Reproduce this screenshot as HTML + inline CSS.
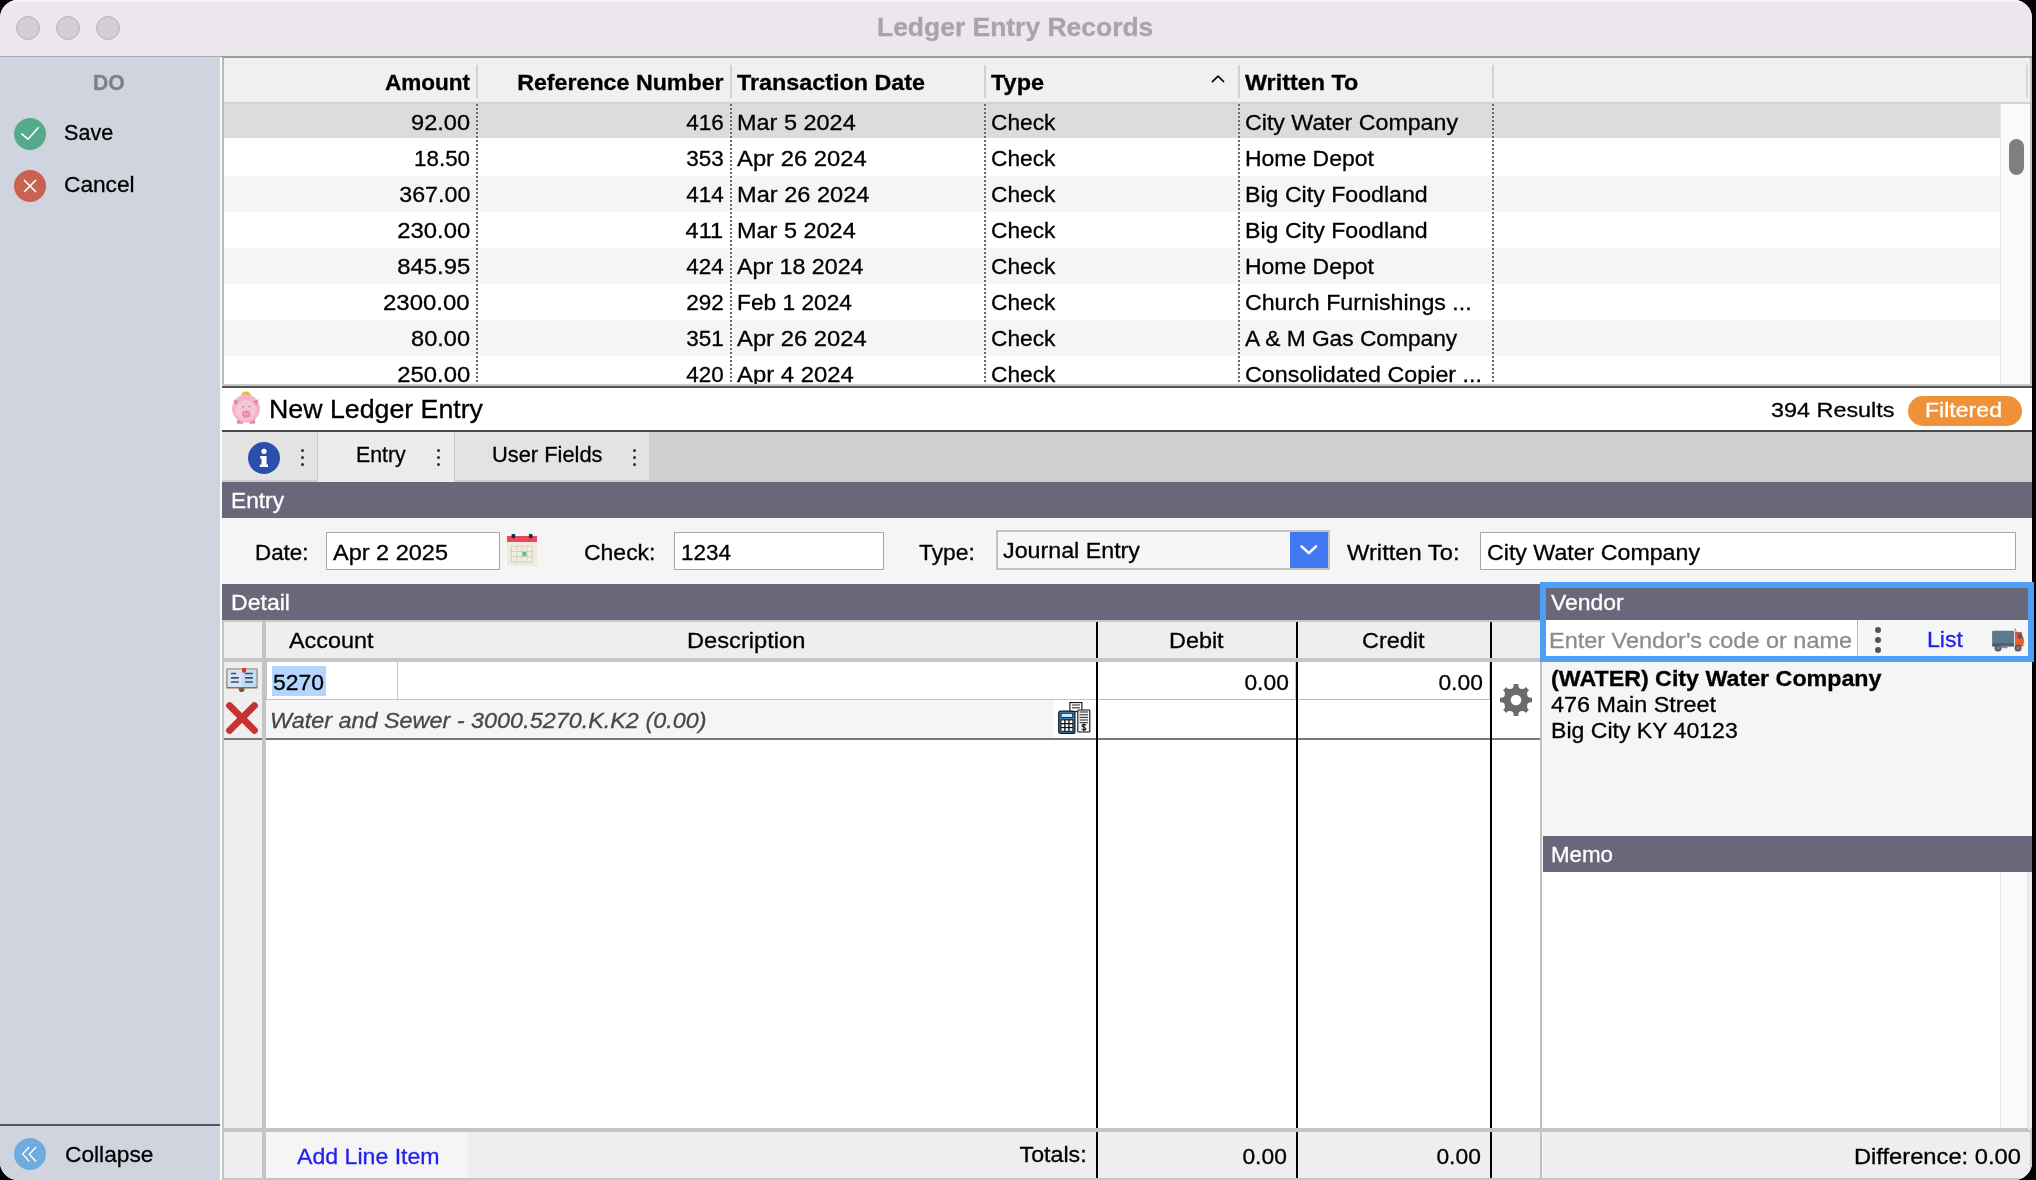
<!DOCTYPE html>
<html><head><meta charset="utf-8"><title>Ledger Entry Records</title>
<style>
html,body{margin:0;padding:0;background:#000;}
body{width:2036px;height:1180px;overflow:hidden;position:relative;font-family:"Liberation Sans", sans-serif;}
#win{position:absolute;left:0;top:0;width:2032px;height:1180px;border-radius:18px;overflow:hidden;background:#fff;}
.b{position:absolute;box-sizing:border-box;}
.t{position:absolute;white-space:pre;display:inline-block;font-family:"Liberation Sans", sans-serif;-webkit-text-stroke:0.3px currentColor;}
svg{position:absolute;overflow:visible;}
</style></head><body>
<div id="win">
<div class="b" style="left:0px;top:0px;width:2032px;height:56px;background:#ece7ed;"></div>
<div class="b" style="left:0px;top:0px;width:2032px;height:2px;background:#f6f3f7;"></div>
<div class="b" style="left:16px;top:16px;width:24px;height:24px;background:#d2ced3;border-radius:50%;border:1px solid #b9b4ba;"></div>
<div class="b" style="left:56px;top:16px;width:24px;height:24px;background:#d2ced3;border-radius:50%;border:1px solid #b9b4ba;"></div>
<div class="b" style="left:96px;top:16px;width:24px;height:24px;background:#d2ced3;border-radius:50%;border:1px solid #b9b4ba;"></div>
<span class="t" style="left:876.60px;top:14px;font-size:26px;line-height:26px;color:#a8a4aa;transform:scaleX(1.0172);transform-origin:left center;font-weight:700;">Ledger Entry Records</span>
<div class="b" style="left:0px;top:56px;width:2032px;height:2px;background:#9c9c9c;"></div>
<div class="b" style="left:0px;top:56px;width:220px;height:1124px;background:#d0d4de;"></div>
<div class="b" style="left:0px;top:56px;width:220px;height:1px;background:#a5afba;"></div>
<div class="b" style="left:220px;top:57px;width:2px;height:1123px;background:#fbfbfb;"></div>
<span class="t" style="left:93.20px;top:72px;font-size:22px;line-height:22px;color:#808080;transform:scaleX(0.9636);transform-origin:left center;font-weight:700;">DO</span>
<span class="t" style="left:64.40px;top:122px;font-size:22px;line-height:22px;color:#000;transform:scaleX(0.9809);transform-origin:left center;">Save</span>
<span class="t" style="left:64.40px;top:174px;font-size:22px;line-height:22px;color:#000;transform:scaleX(1.0309);transform-origin:left center;">Cancel</span>
<div class="b" style="left:0px;top:1124px;width:220px;height:2px;background:#555555;"></div>
<span class="t" style="left:64.80px;top:1144px;font-size:22px;line-height:22px;color:#000;transform:scaleX(1.0326);transform-origin:left center;">Collapse</span>
<div class="b" style="left:222px;top:58px;width:1810px;height:328px;background:#ffffff;"></div>
<div class="b" style="left:222px;top:58px;width:1810px;height:44px;background:#f0f0f0;"></div>
<div class="b" style="left:222px;top:102px;width:1810px;height:2px;background:#d4d4d4;"></div>
<div class="b" style="left:224px;top:104px;width:1776px;height:34px;background:#dcdcdc;"></div>
<div class="b" style="left:224px;top:176px;width:1776px;height:36px;background:#f4f5f5;"></div>
<div class="b" style="left:224px;top:248px;width:1776px;height:36px;background:#f4f5f5;"></div>
<div class="b" style="left:224px;top:320px;width:1776px;height:36px;background:#f4f5f5;"></div>
<div class="b" style="left:476px;top:65px;width:2px;height:33px;background:#d2d2d2;"></div>
<div class="b" style="left:476px;top:104px;width:2px;height:281px;background:repeating-linear-gradient(to bottom,#6a6a6a 0 2px,transparent 2px 4px);"></div>
<div class="b" style="left:730px;top:65px;width:2px;height:33px;background:#d2d2d2;"></div>
<div class="b" style="left:730px;top:104px;width:2px;height:281px;background:repeating-linear-gradient(to bottom,#6a6a6a 0 2px,transparent 2px 4px);"></div>
<div class="b" style="left:984px;top:65px;width:2px;height:33px;background:#d2d2d2;"></div>
<div class="b" style="left:984px;top:104px;width:2px;height:281px;background:repeating-linear-gradient(to bottom,#6a6a6a 0 2px,transparent 2px 4px);"></div>
<div class="b" style="left:1238px;top:65px;width:2px;height:33px;background:#d2d2d2;"></div>
<div class="b" style="left:1238px;top:104px;width:2px;height:281px;background:repeating-linear-gradient(to bottom,#6a6a6a 0 2px,transparent 2px 4px);"></div>
<div class="b" style="left:1492px;top:65px;width:2px;height:33px;background:#d2d2d2;"></div>
<div class="b" style="left:1492px;top:104px;width:2px;height:281px;background:repeating-linear-gradient(to bottom,#6a6a6a 0 2px,transparent 2px 4px);"></div>
<div class="b" style="left:2026px;top:65px;width:2px;height:33px;background:#d8d8d8;"></div>
<div class="b" style="left:2000px;top:104px;width:30px;height:281px;background:#fafafa;border-left:1px solid #e6e6e6;"></div>
<div class="b" style="left:2009px;top:139px;width:15px;height:36px;background:#7f7f7f;border-radius:8px;"></div>
<div class="b" style="left:222px;top:58px;width:2px;height:328px;background:#b9b9b9;"></div>
<div class="b" style="left:2030px;top:58px;width:2px;height:328px;background:#c4c4c4;"></div>
<div class="b" style="left:222px;top:384px;width:1810px;height:2px;background:#c8c8c8;"></div>
<div class="b" style="left:222px;top:386px;width:1810px;height:2px;background:#555555;"></div>
<span class="t" style="left:387.21px;top:72px;font-size:22px;line-height:22px;color:#000;transform:scaleX(1.0253);transform-origin:right center;font-weight:700;">Amount</span>
<span class="t" style="left:527.56px;top:72px;font-size:22px;line-height:22px;color:#000;transform:scaleX(1.0555);transform-origin:right center;font-weight:700;">Reference Number</span>
<span class="t" style="left:736.70px;top:72px;font-size:22px;line-height:22px;color:#000;transform:scaleX(1.0605);transform-origin:left center;font-weight:700;">Transaction Date</span>
<span class="t" style="left:991.00px;top:72px;font-size:22px;line-height:22px;color:#000;transform:scaleX(1.0660);transform-origin:left center;font-weight:700;">Type</span>
<span class="t" style="left:1245.20px;top:72px;font-size:22px;line-height:22px;color:#000;transform:scaleX(1.0606);transform-origin:left center;font-weight:700;">Written To</span>
<div class="b" style="left:222px;top:104px;width:1780px;height:280px;overflow:hidden;"><div style="position:absolute;left:-222px;top:-104px;">
<span class="t" style="left:414.94px;top:112px;font-size:22px;line-height:22px;color:#000;transform:scaleX(1.0715);transform-origin:right center;">92.00</span>
<span class="t" style="left:686.78px;top:112px;font-size:22px;line-height:22px;color:#000;transform:scaleX(1.0213);transform-origin:right center;">416</span>
<span class="t" style="left:736.70px;top:112px;font-size:22px;line-height:22px;color:#000;transform:scaleX(1.0665);transform-origin:left center;">Mar 5 2024</span>
<span class="t" style="left:991.00px;top:112px;font-size:22px;line-height:22px;color:#000;transform:scaleX(1.0327);transform-origin:left center;">Check</span>
<span class="t" style="left:1245.20px;top:112px;font-size:22px;line-height:22px;color:#000;transform:scaleX(1.0538);transform-origin:left center;">City Water Company</span>
<span class="t" style="left:414.94px;top:148px;font-size:22px;line-height:22px;color:#000;transform:scaleX(1.0170);transform-origin:right center;">18.50</span>
<span class="t" style="left:686.78px;top:148px;font-size:22px;line-height:22px;color:#000;transform:scaleX(1.0213);transform-origin:right center;">353</span>
<span class="t" style="left:736.70px;top:148px;font-size:22px;line-height:22px;color:#000;transform:scaleX(1.0820);transform-origin:left center;">Apr 26 2024</span>
<span class="t" style="left:991.00px;top:148px;font-size:22px;line-height:22px;color:#000;transform:scaleX(1.0327);transform-origin:left center;">Check</span>
<span class="t" style="left:1245.20px;top:148px;font-size:22px;line-height:22px;color:#000;transform:scaleX(1.0436);transform-origin:left center;">Home Depot</span>
<span class="t" style="left:402.70px;top:184px;font-size:22px;line-height:22px;color:#000;transform:scaleX(1.0550);transform-origin:right center;">367.00</span>
<span class="t" style="left:686.78px;top:184px;font-size:22px;line-height:22px;color:#000;transform:scaleX(1.0213);transform-origin:right center;">414</span>
<span class="t" style="left:736.70px;top:184px;font-size:22px;line-height:22px;color:#000;transform:scaleX(1.0718);transform-origin:left center;">Mar 26 2024</span>
<span class="t" style="left:991.00px;top:184px;font-size:22px;line-height:22px;color:#000;transform:scaleX(1.0327);transform-origin:left center;">Check</span>
<span class="t" style="left:1245.20px;top:184px;font-size:22px;line-height:22px;color:#000;transform:scaleX(1.0521);transform-origin:left center;">Big City Foodland</span>
<span class="t" style="left:402.70px;top:220px;font-size:22px;line-height:22px;color:#000;transform:scaleX(1.0847);transform-origin:right center;">230.00</span>
<span class="t" style="left:688.42px;top:220px;font-size:22px;line-height:22px;color:#000;transform:scaleX(1.0690);transform-origin:right center;">411</span>
<span class="t" style="left:736.70px;top:220px;font-size:22px;line-height:22px;color:#000;transform:scaleX(1.0665);transform-origin:left center;">Mar 5 2024</span>
<span class="t" style="left:991.00px;top:220px;font-size:22px;line-height:22px;color:#000;transform:scaleX(1.0327);transform-origin:left center;">Check</span>
<span class="t" style="left:1245.20px;top:220px;font-size:22px;line-height:22px;color:#000;transform:scaleX(1.0521);transform-origin:left center;">Big City Foodland</span>
<span class="t" style="left:402.70px;top:256px;font-size:22px;line-height:22px;color:#000;transform:scaleX(1.0847);transform-origin:right center;">845.95</span>
<span class="t" style="left:686.78px;top:256px;font-size:22px;line-height:22px;color:#000;transform:scaleX(1.0213);transform-origin:right center;">424</span>
<span class="t" style="left:736.70px;top:256px;font-size:22px;line-height:22px;color:#000;transform:scaleX(1.0553);transform-origin:left center;">Apr 18 2024</span>
<span class="t" style="left:991.00px;top:256px;font-size:22px;line-height:22px;color:#000;transform:scaleX(1.0327);transform-origin:left center;">Check</span>
<span class="t" style="left:1245.20px;top:256px;font-size:22px;line-height:22px;color:#000;transform:scaleX(1.0436);transform-origin:left center;">Home Depot</span>
<span class="t" style="left:390.47px;top:292px;font-size:22px;line-height:22px;color:#000;transform:scaleX(1.0876);transform-origin:right center;">2300.00</span>
<span class="t" style="left:686.78px;top:292px;font-size:22px;line-height:22px;color:#000;transform:scaleX(1.0213);transform-origin:right center;">292</span>
<span class="t" style="left:736.70px;top:292px;font-size:22px;line-height:22px;color:#000;transform:scaleX(1.0331);transform-origin:left center;">Feb 1 2024</span>
<span class="t" style="left:991.00px;top:292px;font-size:22px;line-height:22px;color:#000;transform:scaleX(1.0327);transform-origin:left center;">Check</span>
<span class="t" style="left:1245.20px;top:292px;font-size:22px;line-height:22px;color:#000;transform:scaleX(1.0534);transform-origin:left center;">Church Furnishings ...</span>
<span class="t" style="left:414.94px;top:328px;font-size:22px;line-height:22px;color:#000;transform:scaleX(1.0715);transform-origin:right center;">80.00</span>
<span class="t" style="left:686.78px;top:328px;font-size:22px;line-height:22px;color:#000;transform:scaleX(1.0213);transform-origin:right center;">351</span>
<span class="t" style="left:736.70px;top:328px;font-size:22px;line-height:22px;color:#000;transform:scaleX(1.0820);transform-origin:left center;">Apr 26 2024</span>
<span class="t" style="left:991.00px;top:328px;font-size:22px;line-height:22px;color:#000;transform:scaleX(1.0327);transform-origin:left center;">Check</span>
<span class="t" style="left:1245.20px;top:328px;font-size:22px;line-height:22px;color:#000;transform:scaleX(1.0330);transform-origin:left center;">A &amp; M Gas Company</span>
<span class="t" style="left:402.70px;top:364px;font-size:22px;line-height:22px;color:#000;transform:scaleX(1.0847);transform-origin:right center;">250.00</span>
<span class="t" style="left:686.78px;top:364px;font-size:22px;line-height:22px;color:#000;transform:scaleX(1.0213);transform-origin:right center;">420</span>
<span class="t" style="left:736.70px;top:364px;font-size:22px;line-height:22px;color:#000;transform:scaleX(1.0842);transform-origin:left center;">Apr 4 2024</span>
<span class="t" style="left:991.00px;top:364px;font-size:22px;line-height:22px;color:#000;transform:scaleX(1.0327);transform-origin:left center;">Check</span>
<span class="t" style="left:1245.20px;top:364px;font-size:22px;line-height:22px;color:#000;transform:scaleX(1.0590);transform-origin:left center;">Consolidated Copier ...</span>
</div></div>
<div class="b" style="left:222px;top:388px;width:1810px;height:42px;background:#ffffff;"></div>
<div class="b" style="left:222px;top:430px;width:1810px;height:2px;background:#4a4a4a;"></div>
<span class="t" style="left:269.30px;top:397px;font-size:25px;line-height:25px;color:#000;transform:scaleX(1.0694);transform-origin:left center;">New Ledger Entry</span>
<span class="t" style="left:1770.80px;top:399px;font-size:21px;line-height:21px;color:#000;transform:scaleX(1.1136);transform-origin:left center;">394 Results</span>
<div class="b" style="left:1908px;top:396px;width:114px;height:30px;background:#ef9138;border-radius:15px;"></div>
<span class="t" style="left:1925.10px;top:399px;font-size:21px;line-height:21px;color:#ffffff;transform:scaleX(1.0995);transform-origin:left center;">Filtered</span>
<div class="b" style="left:222px;top:432px;width:1810px;height:50px;background:#d0d0d0;"></div>
<div class="b" style="left:222px;top:432px;width:96px;height:48px;background:#e3e3e3;"></div>
<div class="b" style="left:318px;top:432px;width:136px;height:50px;background:#ececec;"></div>
<div class="b" style="left:455px;top:432px;width:194px;height:48px;background:#e3e3e3;"></div>
<div class="b" style="left:317px;top:432px;width:1px;height:48px;background:#cdcdcd;"></div>
<div class="b" style="left:454px;top:432px;width:1px;height:48px;background:#cdcdcd;"></div>
<span class="t" style="left:356.30px;top:444px;font-size:22px;line-height:22px;color:#000;transform:scaleX(0.9696);transform-origin:left center;">Entry</span>
<span class="t" style="left:491.50px;top:444px;font-size:22px;line-height:22px;color:#000;transform:scaleX(0.9933);transform-origin:left center;">User Fields</span>
<div class="b" style="left:300.5px;top:448.5px;width:3px;height:3px;background:#303030;border-radius:50%;"></div>
<div class="b" style="left:300.5px;top:455.7px;width:3px;height:3px;background:#303030;border-radius:50%;"></div>
<div class="b" style="left:300.5px;top:462.9px;width:3px;height:3px;background:#303030;border-radius:50%;"></div>
<div class="b" style="left:436.5px;top:448.5px;width:3px;height:3px;background:#303030;border-radius:50%;"></div>
<div class="b" style="left:436.5px;top:455.7px;width:3px;height:3px;background:#303030;border-radius:50%;"></div>
<div class="b" style="left:436.5px;top:462.9px;width:3px;height:3px;background:#303030;border-radius:50%;"></div>
<div class="b" style="left:632.5px;top:448.5px;width:3px;height:3px;background:#303030;border-radius:50%;"></div>
<div class="b" style="left:632.5px;top:455.7px;width:3px;height:3px;background:#303030;border-radius:50%;"></div>
<div class="b" style="left:632.5px;top:462.9px;width:3px;height:3px;background:#303030;border-radius:50%;"></div>
<div class="b" style="left:222px;top:482px;width:1810px;height:36px;background:#69677a;"></div>
<span class="t" style="left:230.60px;top:490px;font-size:22px;line-height:22px;color:#fff;transform:scaleX(1.0319);transform-origin:left center;">Entry</span>
<div class="b" style="left:222px;top:518px;width:1810px;height:66px;background:#f5f5f5;"></div>
<span class="t" style="left:255.00px;top:542px;font-size:22px;line-height:22px;color:#000;transform:scaleX(1.0153);transform-origin:left center;">Date:</span>
<div class="b" style="left:326px;top:532px;width:174px;height:38px;background:#fff;border:1px solid #a8a8a8;"></div>
<span class="t" style="left:333.20px;top:542px;font-size:22px;line-height:22px;color:#000;transform:scaleX(1.0684);transform-origin:left center;">Apr 2 2025</span>
<span class="t" style="left:584.30px;top:542px;font-size:22px;line-height:22px;color:#000;transform:scaleX(1.0440);transform-origin:left center;">Check:</span>
<div class="b" style="left:674px;top:532px;width:210px;height:38px;background:#fff;border:1px solid #a8a8a8;"></div>
<span class="t" style="left:681.00px;top:542px;font-size:22px;line-height:22px;color:#000;transform:scaleX(1.0214);transform-origin:left center;">1234</span>
<span class="t" style="left:919.40px;top:542px;font-size:22px;line-height:22px;color:#000;transform:scaleX(1.0369);transform-origin:left center;">Type:</span>
<div class="b" style="left:996px;top:530px;width:334px;height:40px;background:#f6f6f6;border:2px solid #c2c2c2;"></div>
<span class="t" style="left:1003.00px;top:540px;font-size:22px;line-height:22px;color:#000;transform:scaleX(1.0569);transform-origin:left center;">Journal Entry</span>
<div class="b" style="left:1290px;top:532px;width:38px;height:36px;background:#3f78f0;"></div>
<span class="t" style="left:1347.00px;top:542px;font-size:22px;line-height:22px;color:#000;transform:scaleX(1.0782);transform-origin:left center;">Written To:</span>
<div class="b" style="left:1480px;top:532px;width:536px;height:38px;background:#fff;border:1px solid #a8a8a8;"></div>
<span class="t" style="left:1486.80px;top:542px;font-size:22px;line-height:22px;color:#000;transform:scaleX(1.0538);transform-origin:left center;">City Water Company</span>
<div class="b" style="left:222px;top:584px;width:1320px;height:36px;background:#69677a;"></div>
<span class="t" style="left:230.60px;top:592px;font-size:22px;line-height:22px;color:#fff;transform:scaleX(1.0489);transform-origin:left center;">Detail</span>
<div class="b" style="left:222px;top:620px;width:1320px;height:40px;background:#eeeeee;"></div>
<div class="b" style="left:222px;top:662px;width:1320px;height:468px;background:#ffffff;"></div>
<div class="b" style="left:222px;top:620px;width:44px;height:512px;background:#eeeeee;"></div>
<div class="b" style="left:222px;top:620px;width:2px;height:560px;background:#c4c4c4;"></div>
<div class="b" style="left:262px;top:620px;width:4px;height:560px;background:#c4c4c4;"></div>
<span class="t" style="left:288.80px;top:630px;font-size:22px;line-height:22px;color:#000;transform:scaleX(1.0629);transform-origin:left center;">Account</span>
<span class="t" style="left:686.80px;top:630px;font-size:22px;line-height:22px;color:#000;transform:scaleX(1.0750);transform-origin:left center;">Description</span>
<span class="t" style="left:1168.60px;top:630px;font-size:22px;line-height:22px;color:#000;transform:scaleX(1.0631);transform-origin:left center;">Debit</span>
<span class="t" style="left:1362.30px;top:630px;font-size:22px;line-height:22px;color:#000;transform:scaleX(1.0650);transform-origin:left center;">Credit</span>
<div class="b" style="left:266px;top:662px;width:132px;height:38px;background:#fff;border:1px solid #c4c4c4;border-top:none;"></div>
<div class="b" style="left:398px;top:662px;width:698px;height:38px;background:#fff;border-bottom:1px solid #c4c4c4;"></div>
<div class="b" style="left:271.9px;top:666px;width:54px;height:29.5px;background:#b4d5fe;"></div>
<span class="t" style="left:273.10px;top:672px;font-size:22px;line-height:22px;color:#000;transform:scaleX(1.0418);transform-origin:left center;">5270</span>
<div class="b" style="left:1098px;top:662px;width:198px;height:38px;background:#fff;border-bottom:1px solid #b8b8b8;border-right:1px solid #d0d0d0;"></div>
<div class="b" style="left:1298px;top:662px;width:192px;height:38px;background:#fff;border-bottom:1px solid #b8b8b8;border-right:1px solid #d0d0d0;"></div>
<span class="t" style="left:1246.37px;top:672px;font-size:22px;line-height:22px;color:#000;transform:scaleX(1.0367);transform-origin:right center;">0.00</span>
<span class="t" style="left:1440.17px;top:672px;font-size:22px;line-height:22px;color:#000;transform:scaleX(1.0367);transform-origin:right center;">0.00</span>
<div class="b" style="left:266px;top:700px;width:830px;height:38px;background:#f5f5f5;"></div>
<div class="b" style="left:1054px;top:700px;width:42px;height:38px;background:#ffffff;"></div>
<span class="t" style="left:270.00px;top:710px;font-size:22px;line-height:22px;color:#484848;transform:scaleX(1.0633);transform-origin:left center;font-style:italic;">Water and Sewer - 3000.5270.K.K2 (0.00)</span>
<div class="b" style="left:222px;top:738px;width:1320px;height:2px;background:#777777;"></div>
<div class="b" style="left:222px;top:1132px;width:1320px;height:46px;background:#eeeeee;"></div>
<div class="b" style="left:266px;top:1132px;width:202px;height:46px;background:#f5f5f5;"></div>
<div class="b" style="left:222px;top:1128px;width:2px;height:52px;background:#c4c4c4;"></div>
<div class="b" style="left:262px;top:1128px;width:4px;height:52px;background:#c4c4c4;"></div>
<span class="t" style="left:296.60px;top:1146px;font-size:22px;line-height:22px;color:#1f1ff5;transform:scaleX(1.0505);transform-origin:left center;">Add Line Item</span>
<span class="t" style="left:1022.81px;top:1144px;font-size:22px;line-height:22px;color:#000;transform:scaleX(1.0536);transform-origin:right center;">Totals:</span>
<span class="t" style="left:1244.47px;top:1146px;font-size:22px;line-height:22px;color:#000;transform:scaleX(1.0367);transform-origin:right center;">0.00</span>
<span class="t" style="left:1438.37px;top:1146px;font-size:22px;line-height:22px;color:#000;transform:scaleX(1.0367);transform-origin:right center;">0.00</span>
<div class="b" style="left:1096px;top:622px;width:2px;height:556px;background:#000;"></div>
<div class="b" style="left:1296px;top:622px;width:2px;height:556px;background:#000;"></div>
<div class="b" style="left:1490px;top:622px;width:2px;height:556px;background:#000;"></div>
<div class="b" style="left:222px;top:1128px;width:1320px;height:4px;background:#c4c4c4;"></div>
<div class="b" style="left:222px;top:658px;width:1320px;height:4px;background:#c6c6c6;"></div>
<div class="b" style="left:222px;top:620px;width:1320px;height:2px;background:#c8c8c8;"></div>
<div class="b" style="left:222px;top:620px;width:2px;height:560px;background:#c4c4c4;"></div>
<div class="b" style="left:262px;top:620px;width:4px;height:560px;background:#c4c4c4;"></div>
<div class="b" style="left:1540px;top:584px;width:492px;height:596px;background:#f5f5f5;"></div>
<div class="b" style="left:1540px;top:662px;width:2px;height:518px;background:#c0c0c0;"></div>
<div class="b" style="left:1540px;top:584px;width:492px;height:36px;background:#69677a;"></div>
<span class="t" style="left:1550.50px;top:592px;font-size:22px;line-height:22px;color:#fff;transform:scaleX(1.0425);transform-origin:left center;">Vendor</span>
<div class="b" style="left:1545px;top:620px;width:484px;height:38px;background:#f6f6f6;"></div>
<div class="b" style="left:1545px;top:620px;width:313px;height:37px;background:#fff;border-right:1px solid #b8b8b8;"></div>
<span class="t" style="left:1548.50px;top:630px;font-size:22px;line-height:22px;color:#8c8c8c;transform:scaleX(1.0659);transform-origin:left center;">Enter Vendor&#x27;s code or name</span>
<div class="b" style="left:1875px;top:626.8px;width:6px;height:6px;background:#555;border-radius:50%;"></div>
<div class="b" style="left:1875px;top:636.9px;width:6px;height:6px;background:#555;border-radius:50%;"></div>
<div class="b" style="left:1875px;top:647px;width:6px;height:6px;background:#555;border-radius:50%;"></div>
<span class="t" style="left:1927.00px;top:629px;font-size:22px;line-height:22px;color:#1f1ff5;transform:scaleX(1.0511);transform-origin:left center;">List</span>
<span class="t" style="left:1551.30px;top:668px;font-size:22px;line-height:22px;color:#000;transform:scaleX(1.0562);transform-origin:left center;font-weight:700;">(WATER) City Water Company</span>
<span class="t" style="left:1551.30px;top:694px;font-size:22px;line-height:22px;color:#000;transform:scaleX(1.0624);transform-origin:left center;">476 Main Street</span>
<span class="t" style="left:1551.30px;top:720px;font-size:22px;line-height:22px;color:#000;transform:scaleX(1.0480);transform-origin:left center;">Big City KY 40123</span>
<div class="b" style="left:1543px;top:836px;width:489px;height:36px;background:#69677a;"></div>
<span class="t" style="left:1550.50px;top:844px;font-size:22px;line-height:22px;color:#fff;transform:scaleX(1.0143);transform-origin:left center;">Memo</span>
<div class="b" style="left:1543px;top:872px;width:489px;height:258px;background:#ffffff;"></div>
<div class="b" style="left:2000px;top:872px;width:28px;height:258px;background:#fafafa;border-left:1px solid #e6e6e6;border-right:1px solid #e6e6e6;"></div>
<div class="b" style="left:1540px;top:1128px;width:492px;height:4px;background:#c4c4c4;"></div>
<div class="b" style="left:1543px;top:1132px;width:489px;height:46px;background:#eeeeee;"></div>
<div class="b" style="left:2028px;top:872px;width:4px;height:258px;background:#eeeeee;"></div>
<span class="t" style="left:1866.08px;top:1146px;font-size:22px;line-height:22px;color:#000;transform:scaleX(1.0780);transform-origin:right center;">Difference: 0.00</span>
<div class="b" style="left:2030px;top:1128px;width:2px;height:52px;background:#cccccc;"></div>
<div class="b" style="left:222px;top:1178px;width:1810px;height:2px;background:#c4c4c4;"></div>
<svg style="left:14px;top:118px" width="32" height="32" viewBox="0 0 32 32"><circle cx="16" cy="16" r="16" fill="#56a98b"/><path d="M7.3 15.6 L14 21.2 L24.7 9.3" fill="none" stroke="#fff" stroke-width="1.6"/></svg>
<svg style="left:14px;top:170px" width="32" height="32" viewBox="0 0 32 32"><circle cx="16" cy="16" r="16" fill="#c96251"/><path d="M10 10 L22 22 M22 10 L10 22" fill="none" stroke="#fff" stroke-width="1.6"/></svg>
<svg style="left:14px;top:1138px" width="32" height="32" viewBox="0 0 32 32"><circle cx="16" cy="16" r="16" fill="#6fabdc"/><path d="M15.2 9 L8.7 16 L15.2 23.4 M22 9 L15.3 16.2 L22 23.4" fill="none" stroke="#fff" stroke-width="1.4"/></svg>
<svg style="left:1208px;top:72px" width="20" height="14" viewBox="0 0 20 14"><path d="M3.9 10.1 L10.1 4.2 L16 10" fill="none" stroke="#000" stroke-width="1.7"/></svg>
<svg style="left:230px;top:390px" width="32" height="36" viewBox="0 0 32 36">
<ellipse cx="16" cy="5.2" rx="4.8" ry="3.6" fill="#e8b93c"/>
<rect x="7" y="28" width="6.2" height="5.7" fill="#e08aa8"/><rect x="19.3" y="28" width="5.8" height="5.7" fill="#e08aa8"/>
<circle cx="16" cy="18.6" r="14" fill="#f4b3c8"/>
<path d="M3.5 9.5 L9 11 L5.2 15.5 Z M28.5 9.5 L23 11 L26.8 15.5 Z" fill="#dd8aa6"/>
<circle cx="15.8" cy="20.2" r="10.2" fill="#f6c5d7"/>
<ellipse cx="16.3" cy="24.2" rx="4.3" ry="3.6" fill="#e58bab"/>
<circle cx="14.8" cy="24.2" r="0.9" fill="#f6c5d7"/><circle cx="17.8" cy="24.2" r="0.9" fill="#f6c5d7"/>
<circle cx="13.2" cy="16.8" r="0.8" fill="#5d7fa8"/><circle cx="19.5" cy="16.8" r="0.8" fill="#5d7fa8"/>
</svg>
<svg style="left:248px;top:442px" width="32" height="32" viewBox="0 0 32 32"><circle cx="16" cy="16" r="16" fill="#2a4fac"/>
<circle cx="16" cy="9.3" r="2.6" fill="#fff"/>
<path d="M12.2 13.9 H18.6 V22.6 H20 V25.1 H11.8 V22.6 H13.5 V16.4 H12.2 Z" fill="#fff"/></svg>
<svg style="left:507px;top:534px" width="30" height="32" viewBox="0 0 30 32">
<rect x="0" y="2" width="30" height="6.2" fill="#e84a5a"/>
<rect x="0" y="8.2" width="30" height="23.6" fill="#eeecdd"/>
<rect x="4.6" y="0.1" width="3.6" height="4.1" fill="#1f2e48"/><rect x="21.9" y="0.1" width="3.6" height="4.1" fill="#1f2e48"/>
<rect x="4.6" y="12.2" width="20.6" height="15.8" fill="#f0eee0" stroke="#cfcab2" stroke-width="0.8"/>
<path d="M9.75 12.2 V28 M14.9 12.2 V28 M20.05 12.2 V28 M4.6 17.5 H25.2 M4.6 22.7 H25.2" stroke="#cfcab2" stroke-width="0.8" fill="none"/>
<rect x="15.5" y="18" width="3.9" height="4.1" fill="#4fbf9b"/>
</svg>
<svg style="left:1290px;top:532px" width="38" height="36" viewBox="0 0 38 36"><path d="M11.5 14.4 L18.9 21.1 L26 14.4" fill="none" stroke="#fff" stroke-width="2.6" stroke-linecap="round" stroke-linejoin="round"/></svg>
<svg style="left:226px;top:668px" width="32" height="24" viewBox="0 0 32 24">
<circle cx="15.6" cy="21.2" r="2.8" fill="#6f5a42"/>
<rect x="0.4" y="0.6" width="31.2" height="19.8" rx="1" fill="#8b6f4e"/>
<rect x="1.4" y="1.4" width="14.6" height="17.6" fill="#d3e5f7"/><rect x="16" y="1.4" width="14.6" height="17.6" fill="#c0dcf8"/>
<path d="M5.6 5.5 H9.4 M5.6 9.8 H12.2 M5.6 14 H12.2 M19.7 5.5 H26.2 M19.7 9.8 H26.2 M19.7 14 H26.2" stroke="#4a4a55" stroke-width="1.7" stroke-linecap="round"/>
<path d="M16.1 0 H19.9 V4 L18 5 L16.1 4 Z" fill="#d8351f"/>
</svg>
<svg style="left:226px;top:702px" width="32" height="32" viewBox="0 0 32 32"><path d="M3.6 3.6 L28.4 28.4 M28.4 3.6 L3.6 28.4" stroke="#c93232" stroke-width="7" stroke-linecap="round" fill="none"/></svg>
<svg style="left:1057px;top:701px" width="34" height="34" viewBox="0 0 34 34">
<rect x="12.9" y="1.6" width="12" height="9" fill="#fff" stroke="#111" stroke-width="1.1"/>
<path d="M15 4 H23 M15 6.8 H23" stroke="#222" stroke-width="1"/>
<rect x="20.8" y="9" width="12" height="22" rx="0.8" fill="#f4f4f4" stroke="#111" stroke-width="1.1"/>
<path d="M22.6 11 H31 M22.6 13.8 H31 M22.6 16.4 H31 M22.6 19 H31 M22.6 21.7 H31" stroke="#222" stroke-width="1"/>
<path d="M28.9 24.6 C28.9 23 25 23 25 24.7 C25 26.4 28.9 25.9 28.9 27.7 C28.9 29.5 25 29.4 24.9 27.8 M26.9 22.4 V30.5" stroke="#111" stroke-width="1.1" fill="none"/>
<rect x="1.7" y="10.2" width="16.2" height="22.2" rx="2" fill="#3a7fb5" stroke="#0c1a26" stroke-width="1.2"/>
<rect x="4.1" y="12.3" width="11.6" height="4.1" fill="#cfe6f7" stroke="#0c1a26" stroke-width="0.8"/>
<rect x="3.4" y="18.4" width="13" height="12.2" fill="#111"/>
<g fill="#fff"><rect x="4.4" y="19.4" width="2.8" height="2.6"/><rect x="8.5" y="19.4" width="2.8" height="2.6"/><rect x="12.6" y="19.4" width="2.8" height="2.6"/>
<rect x="4.4" y="23.3" width="2.8" height="2.6"/><rect x="8.5" y="23.3" width="2.8" height="2.6"/><rect x="12.6" y="23.3" width="2.8" height="2.6"/>
<rect x="4.4" y="27.2" width="2.8" height="2.6"/><rect x="8.5" y="27.2" width="2.8" height="2.6"/><rect x="12.6" y="27.2" width="2.8" height="2.6"/></g>
</svg>
<svg style="left:1496px;top:680px" width="40" height="40" viewBox="0 0 40 40"><defs><mask id="gm"><path d="M36.00 26.63 L26.63 36.00 L13.37 36.00 L4.00 26.63 L4.00 13.37 L13.37 4.00 L26.63 4.00 L36.00 13.37 Z" fill="#fff"/><circle cx="34.97" cy="26.20" r="3.9" fill="#000"/><circle cx="26.20" cy="34.97" r="3.9" fill="#000"/><circle cx="13.80" cy="34.97" r="3.9" fill="#000"/><circle cx="5.03" cy="26.20" r="3.9" fill="#000"/><circle cx="5.03" cy="13.80" r="3.9" fill="#000"/><circle cx="13.80" cy="5.03" r="3.9" fill="#000"/><circle cx="26.20" cy="5.03" r="3.9" fill="#000"/><circle cx="34.97" cy="13.80" r="3.9" fill="#000"/><circle cx="20" cy="20" r="5.3" fill="#000"/></mask></defs>
<rect x="0" y="0" width="40" height="40" fill="#6b6b6b" mask="url(#gm)"/></svg>
<svg style="left:1990px;top:626px" width="38" height="28" viewBox="0 0 38 28">
<path d="M24.8 2.4 L26.4 6.4" stroke="#666" stroke-width="0.9"/>
<rect x="2.1" y="4.7" width="22" height="12.3" rx="1" fill="#5c7a8e"/>
<rect x="2.1" y="16.9" width="22" height="3.7" fill="#505f7a"/>
<path d="M24.9 6.8 H31.6 L34 13.5 V20.2 H24.9 Z" fill="#ef5f2e"/>
<rect x="24.9" y="6.2" width="6.9" height="1.6" fill="#d63a3a"/>
<path d="M27.6 8 H31.2 L32.6 12.4 H27.6 Z" fill="#555a6e"/>
<rect x="33" y="17.2" width="1.6" height="2.2" fill="#ffd84a"/>
<rect x="12" y="20.4" width="5.5" height="1.8" fill="#8a8791"/>
<circle cx="8" cy="21.9" r="3.5" fill="#55536a"/><circle cx="8" cy="21.9" r="2" fill="#7b7685"/>
<circle cx="28.1" cy="21.9" r="3.5" fill="#55536a"/><circle cx="28.1" cy="21.9" r="2" fill="#7b7685"/>
</svg>
</div>
<div class="b" style="left:1540px;top:582px;width:494px;height:80px;border:6px solid #4a9ff6;"></div>
</body></html>
